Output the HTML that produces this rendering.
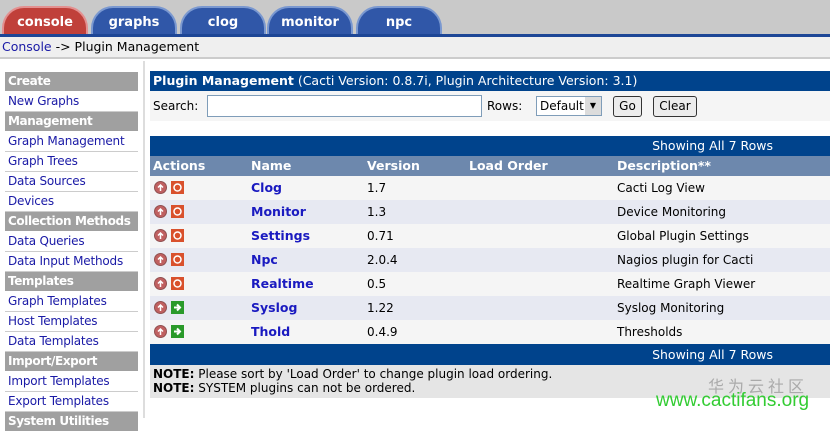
<!DOCTYPE html><html><head><style>
*{margin:0;padding:0;box-sizing:border-box}
body{width:830px;height:418px;overflow:hidden;background:#fff;font-family:Verdana,"DejaVu Sans",sans-serif;font-size:12px;color:#000;position:relative}
.a{position:absolute}
.tab{position:absolute;top:6px;height:30px;width:86px;border-radius:22px 22px 0 0;background:#3057a8;border:2px solid #7a98d0;border-bottom:none;color:#fff;font-weight:bold;font-size:13px;text-align:center;line-height:30px}
.side div{height:20px;line-height:19px;padding-left:3px;border-bottom:1px solid #ccc;color:#1a1aa6;font-size:12px;letter-spacing:-0.2px;white-space:nowrap;overflow:hidden}
.side .h{background:#a0a0a0;color:#fff;font-weight:bold;border-bottom:1px solid #fff;letter-spacing:-0.4px}
.row{position:absolute;left:150px;width:680px;height:24px;line-height:24px}
.row span{position:absolute}
.ic{display:inline-block;width:13px;height:13px;vertical-align:middle;margin-top:-2px}
</style></head><body>
<div class="a" style="left:0;top:0;width:830px;height:36px;background:#c9c9c9"></div>
<div class="tab" style="left:2px;background:#c0403a;border-color:#e39090">console</div>
<div class="tab" style="left:91px">graphs</div>
<div class="tab" style="left:180px">clog</div>
<div class="tab" style="left:267px">monitor</div>
<div class="tab" style="left:356px">npc</div>
<div class="a" style="left:0;top:34px;width:830px;height:3px;background:#1d4696"></div>
<div class="a" style="left:0;top:37px;width:830px;height:22px;background:#efefef;border-bottom:2px solid #ccc;line-height:20px;padding-left:2px;font-size:12.5px"><span style="color:#1a1aa6">Console</span> -&gt; Plugin Management</div>
<div class="a" style="left:143px;top:61px;width:2px;height:357px;background:#ddd"></div>
<div class="a side" style="left:5px;top:72px;width:133px">
<div class="h">Create</div><div>New Graphs</div><div class="h">Management</div><div>Graph Management</div><div>Graph Trees</div><div>Data Sources</div><div>Devices</div><div class="h">Collection Methods</div><div>Data Queries</div><div>Data Input Methods</div><div class="h">Templates</div><div>Graph Templates</div><div>Host Templates</div><div>Data Templates</div><div class="h">Import/Export</div><div>Import Templates</div><div>Export Templates</div><div class="h">System Utilities</div>
</div>
<div class="a" style="left:150px;top:71px;width:680px;height:20px;background:#00438c;color:#fff;line-height:20px;padding-left:3px;font-size:12.5px"><b>Plugin Management</b> (Cacti Version: 0.8.7i, Plugin Architecture Version: 3.1)</div>
<div class="a" style="left:150px;top:91px;width:680px;height:30px;background:#f5f5f5"></div>
<div class="a" style="left:153px;top:99px">Search:</div>
<div class="a" style="left:207px;top:95px;width:275px;height:22px;border:1px solid #7f9db9;background:#fff"></div>
<div class="a" style="left:487px;top:99px">Rows:</div>
<div class="a" style="left:536px;top:96px;width:66px;height:20px;border:1px solid #7f9db9;background:#fff;line-height:18px;padding-left:3px">Default<span style="position:absolute;right:0;top:0;width:16px;height:18px;background:#dcdcdc;font-size:8px;text-align:center">▼</span></div>
<div class="a" style="left:613px;top:96px;width:29px;height:21px;border:1px solid #333;border-radius:3px;background:#ececec;text-align:center;line-height:19px">Go</div>
<div class="a" style="left:653px;top:96px;width:44px;height:21px;border:1px solid #333;border-radius:3px;background:#ececec;text-align:center;line-height:19px">Clear</div>
<div class="a" style="left:150px;top:136px;width:680px;height:20px;background:#00438c;color:#fff;text-align:right;padding-right:57px;line-height:20px;font-size:12.5px">Showing All 7 Rows</div>
<div class="row" style="top:156px;height:20px;line-height:20px;background:#6d88ad;color:#fff;font-weight:bold;font-size:12.5px"><span style="left:3px">Actions</span><span style="left:101px">Name</span><span style="left:217px">Version</span><span style="left:319px">Load Order</span><span style="left:467px">Description**</span></div>
<div id="rows"></div>
<div class="a" style="left:150px;top:344px;width:680px;height:21px;background:#00438c;color:#fff;text-align:right;padding-right:57px;line-height:21px;font-size:12.5px">Showing All 7 Rows</div>
<div class="a" style="left:150px;top:365px;width:680px;height:33px;background:#e5e5e5;padding:2px 3px;line-height:14px;font-size:12px"><b>NOTE:</b> Please sort by 'Load Order' to change plugin load ordering.<br><b>NOTE:</b> SYSTEM plugins can not be ordered.</div>
<div class="a" style="left:708px;top:373px;color:#aaa;font-size:16px;letter-spacing:4px;font-family:'Noto Sans CJK SC',sans-serif">华为云社区</div>
<div class="a" style="left:656px;top:390px;color:#33cc33;font-size:19px;font-family:'Liberation Sans',sans-serif">www.cactifans.org</div>
<script>
var d=[["Clog","1.7","Cacti Log View",0],["Monitor","1.3","Device Monitoring",0],["Settings","0.71","Global Plugin Settings",0],["Npc","2.0.4","Nagios plugin for Cacti",0],["Realtime","0.5","Realtime Graph Viewer",0],["Syslog","1.22","Syslog Monitoring",1],["Thold","0.4.9","Thresholds",1]];
var h="";d.forEach(function(r,i){var ic2=r[3]?'<svg class="ic" viewBox="0 0 13 13"><rect width="13" height="13" fill="#2a9a2a"/><path d="M3 6.5h6M6 3.5l3 3-3 3" stroke="#fff" stroke-width="2" fill="none"/></svg>':'<svg class="ic" viewBox="0 0 13 13"><rect width="13" height="13" fill="#d9512c"/><circle cx="6.5" cy="6.5" r="3.5" stroke="#fff" stroke-width="1.5" fill="none"/></svg>';
h+='<div class="row" style="top:'+(176+i*24)+'px;background:'+(i%2?'#e7e9f2':'#f5f5f5')+'"><span style="left:4px"><svg class="ic" viewBox="0 0 13 13"><circle cx="6.5" cy="6.5" r="6" fill="#c06060" stroke="#905050"/><path d="M6.5 10V4M4 6.5l2.5-2.5 2.5 2.5" stroke="#fff" stroke-width="1.5" fill="none"/></svg> '+ic2+'</span><span style="left:101px;color:#1a1ac0;font-weight:bold;font-size:12.5px">'+r[0]+'</span><span style="left:217px">'+r[1]+'</span><span style="left:467px">'+r[2]+'</span></div>';});
document.getElementById("rows").innerHTML=h;
</script>
</body></html>
